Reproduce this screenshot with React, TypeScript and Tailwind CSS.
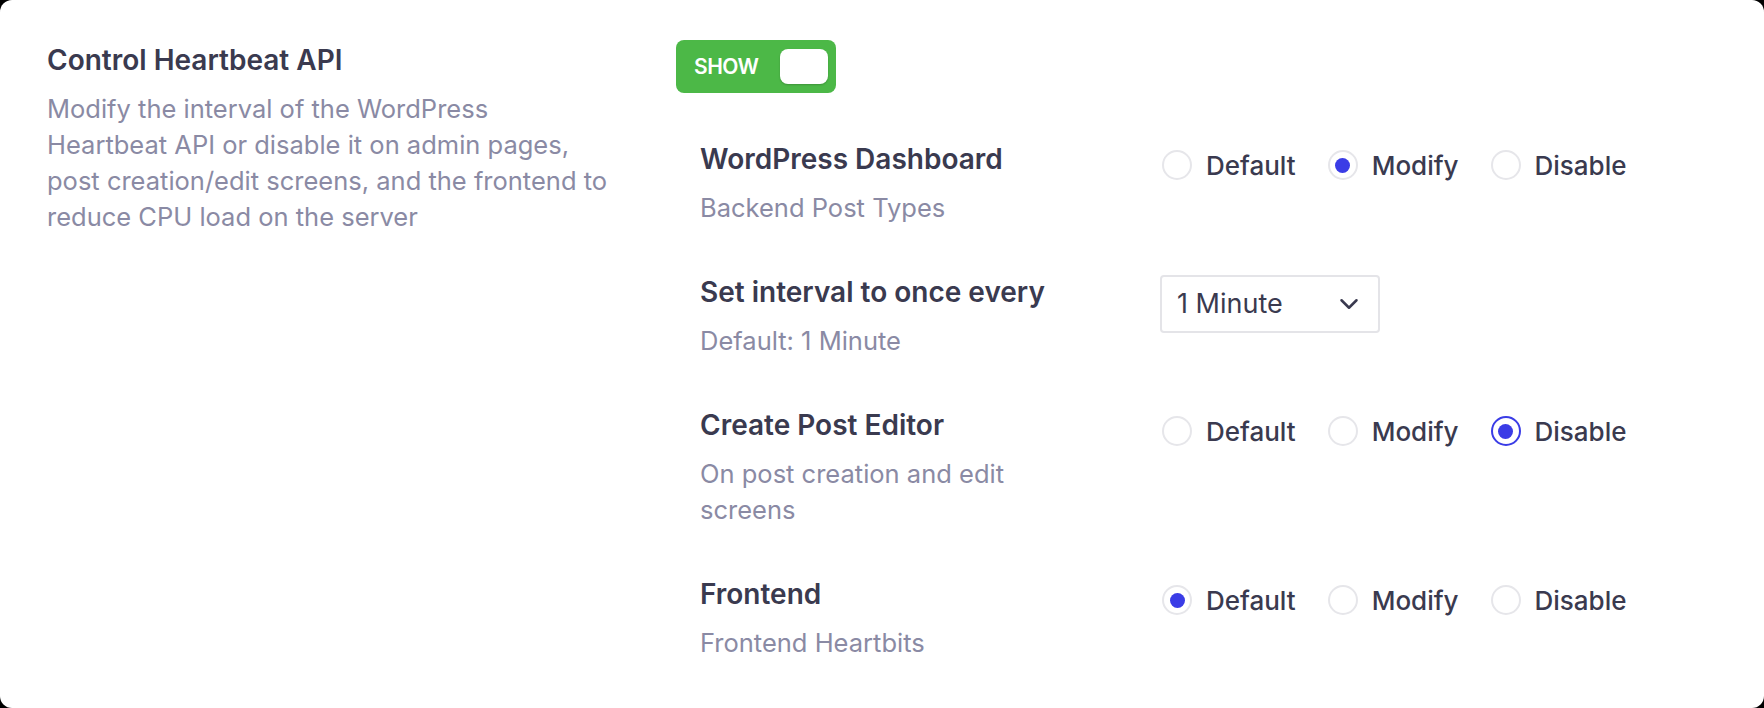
import { useState } from "react";
import { ChevronDown } from "lucide-react";

type Choice = "default" | "modify" | "disable";

const options: { label: string; value: Choice }[] = [
  { label: "Default", value: "default" },
  { label: "Modify", value: "modify" },
  { label: "Disable", value: "disable" },
];

function RadioGroup({
  value,
  focused,
  onChange,
}: {
  value: Choice;
  focused?: boolean;
  onChange: (v: Choice) => void;
}) {
  return (
    <div className="flex items-center gap-[32px] h-[36px] mt-[6px]">
      {options.map((opt) => {
        const checked = opt.value === value;
        return (
          <button
            key={opt.value}
            onClick={() => onChange(opt.value)}
            className="flex items-center gap-[14px]"
          >
            <span
              className={`w-[30px] h-[30px] rounded-full flex items-center justify-center bg-white ${
                checked && focused ? "border-2 border-[#3a3ce6]" : "border-2 border-[#e6e6ea]"
              }`}
            >
              {checked && <span className="w-[15px] h-[15px] rounded-full bg-[#3a3ce6]" />}
            </span>
            <span className="text-[26px] font-medium text-[#3a3a4f]">{opt.label}</span>
          </button>
        );
      })}
    </div>
  );
}

function SettingRow({
  title,
  subtitle,
  children,
}: {
  title: string;
  subtitle: string;
  children: React.ReactNode;
}) {
  return (
    <div className="grid grid-cols-[462px_1fr]">
      <div className="max-w-[350px]">
        <div className="text-[28px] leading-[36px] font-semibold text-[#3a3a4f]">{title}</div>
        <div className="mt-[13px] text-[25.5px] leading-[36px] text-[#8a8aa4]">{subtitle}</div>
      </div>
      <div>{children}</div>
    </div>
  );
}

export default function App() {
  const [show, setShow] = useState(true);
  const [dashboard, setDashboard] = useState<Choice>("modify");
  const [editor, setEditor] = useState<Choice>("disable");
  const [frontend, setFrontend] = useState<Choice>("default");

  return (
    <div className="bg-black w-[1764px] h-[708px]" style={{ fontFamily: "Inter, 'Noto Sans', sans-serif" }}>
      <div className="bg-white w-full h-full rounded-[12px] flex pl-[47px] pt-[40px]">
        {/* Left description */}
        <div className="w-[629px]">
          <h2 className="text-[28px] leading-[36px] font-semibold text-[#3a3a4f] mt-[2px]">
            Control Heartbeat API
          </h2>
          <p className="mt-[13px] max-w-[564px] text-[25.5px] leading-[36px] text-[#8a8aa4]">
            Modify the interval of the WordPress Heartbeat API or disable it on admin pages, post
            creation/edit screens, and the frontend to reduce CPU load on the server
          </p>
        </div>

        {/* Right settings */}
        <div className="flex-1">
          <button
            onClick={() => setShow(!show)}
            className="w-[160px] h-[53px] rounded-[8px] bg-[#4cb847] flex items-center justify-between pl-[18px] pr-[8px]"
          >
            <span className="text-white text-[21px] font-semibold tracking-tight">SHOW</span>
            <span className="w-[48px] h-[35px] rounded-[8px] bg-white shadow-[0_1px_2px_rgba(0,0,0,0.2)]" />
          </button>

          <div className="pl-[24px] mt-[48px] flex flex-col gap-[48px]">
            <SettingRow title="WordPress Dashboard" subtitle="Backend Post Types">
              <RadioGroup value={dashboard} onChange={setDashboard} />
            </SettingRow>

            <SettingRow title="Set interval to once every" subtitle="Default: 1 Minute">
              <div className="w-[220px] h-[58px] mt-[1px] border-2 border-[#e4e4e8] rounded-[4px] flex items-center justify-between pl-[15px] pr-[14px] -ml-[2px]">
                <span className="text-[27px] text-[#3a3a4f]">1 Minute</span>
                <ChevronDown className="w-[30px] h-[30px] text-[#3a3a4f]" strokeWidth={2} />
              </div>
            </SettingRow>

            <SettingRow title="Create Post Editor" subtitle="On post creation and edit screens">
              <RadioGroup value={editor} focused onChange={setEditor} />
            </SettingRow>

            <SettingRow title="Frontend" subtitle="Frontend Heartbits">
              <RadioGroup value={frontend} onChange={setFrontend} />
            </SettingRow>
          </div>
        </div>
      </div>
    </div>
  );
}
